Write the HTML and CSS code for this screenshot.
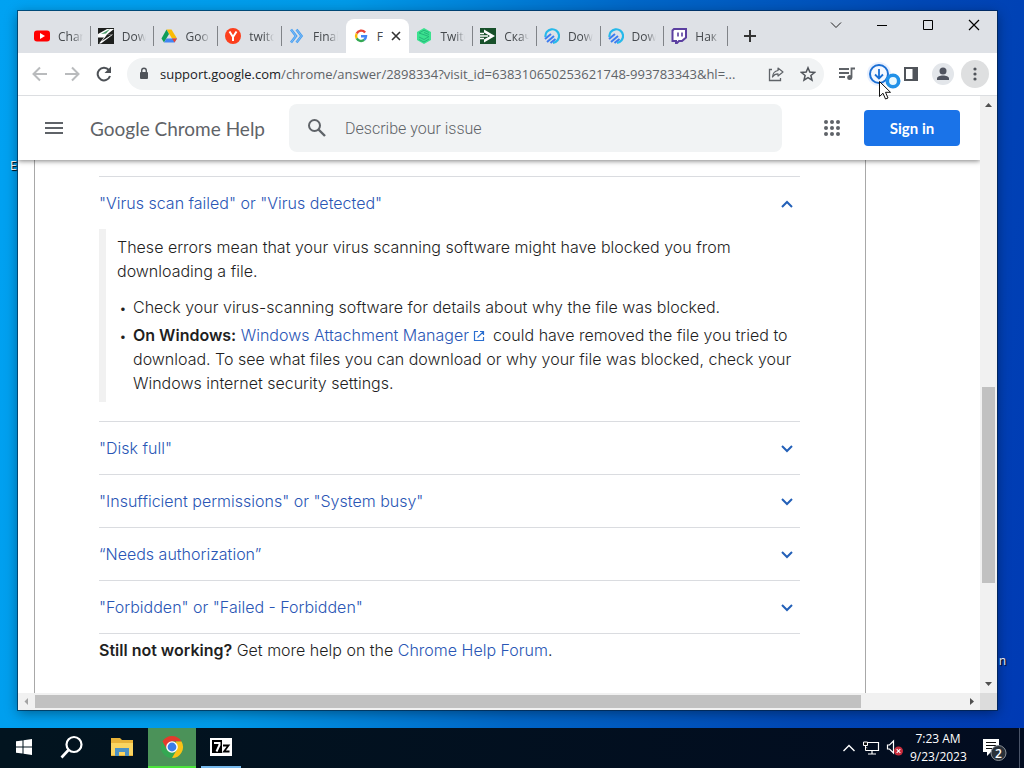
FILE: index.html
```html
<!DOCTYPE html>
<html lang="en">
<head>
    <meta charset="UTF-8">
    <meta name="viewport" content="width=device-width, initial-scale=1.0">
    <title>Fix file download errors - Google Chrome Help</title>
    <link rel="stylesheet" href="styles.css">
</head>
<body>

    <main class="desktop">
        <span class="desktop-label label-left">E</span>
        <span class="desktop-label label-right">n</span>

        <div class="window">

            <!-- Tab strip -->
            <div class="titlebar">
                <div class="tabs">
                    <button class="tab">
                        <svg class="favicon" viewBox="0 0 16 16"><rect x="0" y="2.500" width="16" height="11" rx="3" fill="#f00"/><path d="M6 5l5 3-5 3z" fill="#fff"/></svg>
                        <span class="tab-title">Chan</span>
                    </button>
                    <button class="tab">
                        <svg class="favicon" viewBox="0 0 16 16"><rect width="16" height="16" fill="#1d1f1d"/><path d="M0 6L9 1h7L9 6.500h6L3 15.500H1L6 9.500H0z" fill="#fff"/><path d="M3 6l9-5-4 4.500z" fill="#4c9a6a"/><path d="M9 6.500h5L4 13l4-5z" fill="#1d1f1d"/></svg>
                        <span class="tab-title">Dow</span>
                    </button>
                    <button class="tab">
                        <svg class="favicon" viewBox="0 0 16 16"><path d="M5.500 1.500h5L16 10.500h-5z" fill="#fbbc04"/><path d="M5.500 1.500L8 6 3 14.500.500 10.500z" fill="#0f9d58"/><path d="M5.500 10.500H16L13.500 14.500H3z" fill="#4285f4"/><path d="M11 10.500h5l-2.500 4z" fill="#ea4335"/></svg>
                        <span class="tab-title">Goo</span>
                    </button>
                    <button class="tab">
                        <svg class="favicon" viewBox="0 0 16 16"><circle cx="8" cy="8" r="8" fill="#fc3f1d"/><path d="M4.500 3.500L8 9v4M11.500 3.500L8 9" fill="none" stroke="#fff" stroke-width="2"/></svg>
                        <span class="tab-title">twitc</span>
                    </button>
                    <button class="tab">
                        <svg class="favicon" viewBox="0 0 16 16"><path d="M2 1.500l5 6.500-5 6.500M7.500 1.500l5 6.500-5 6.500" fill="none" stroke="#4a9ff0" stroke-width="2.600"/><path d="M2 1.500l5 6.500-5 6.500M7.500 1.500l5 6.500-5 6.500" fill="none" stroke="#9fd0fa" stroke-width=".6"/></svg>
                        <span class="tab-title">Final</span>
                    </button>
                    <button class="tab active">
                        <svg class="favicon" viewBox="0 0 16 16"><g fill="none" stroke-width="2.400"><path d="M12.100 4.400A5 5 0 0 0 3.700 5.600" stroke="#ea4335"/><path d="M3.700 5.600a5 5 0 0 0 0 4.800" stroke="#fbbc04"/><path d="M3.700 10.400a5 5 0 0 0 7.500 1.400" stroke="#34a853"/><path d="M11.200 11.800A5 5 0 0 0 13 8.200H8" stroke="#4285f4"/></g></svg>
                        <span class="tab-title">F</span>
                        <svg class="tab-close" viewBox="0 0 10 10"><path d="M1 1l8 8M9 1l-8 8" stroke="#333" stroke-width="1.600"/></svg>
                    </button>
                    <button class="tab">
                        <svg class="favicon" viewBox="0 0 16 16"><path d="M8 0l7 4v8l-7 4-7-4V4z" fill="#3be28f"/><path d="M13 4.500L8 2.200 3 5l10 3.500L8 11.500 3 9M3 11.500L8 14l5-3M13 6.500L8 4.500" fill="none" stroke="#22b077" stroke-width=".9"/></svg>
                        <span class="tab-title">Twitc</span>
                    </button>
                    <button class="tab">
                        <svg class="favicon" viewBox="0 0 16 16"><rect width="16" height="16" fill="#17502a"/><path d="M0 5.500h4M0 8h8M0 10.500h4" stroke="#fff" stroke-width="1.400"/><path d="M4 1.500L15 8 4 14.500v-3L10 8 4 4.500z" fill="#fff"/></svg>
                        <span class="tab-title">Скач</span>
                    </button>
                    <button class="tab">
                        <svg class="favicon" viewBox="0 0 16 16"><path d="M1.500 9A6.800 6.800 0 1 1 9 14.800" fill="none" stroke="#26b9ea" stroke-width="2.200"/><path d="M1 11l6-5M3 14l7-6M6.500 15l5-4" stroke="#3d7df0" stroke-width="2"/></svg>
                        <span class="tab-title">Dow</span>
                    </button>
                    <button class="tab">
                        <svg class="favicon" viewBox="0 0 16 16"><path d="M1.500 9A6.800 6.800 0 1 1 9 14.800" fill="none" stroke="#26b9ea" stroke-width="2.200"/><path d="M1 11l6-5M3 14l7-6M6.500 15l5-4" stroke="#3d7df0" stroke-width="2"/></svg>
                        <span class="tab-title">Dow</span>
                    </button>
                    <button class="tab">
                        <svg class="favicon" viewBox="0 0 16 16"><path d="M1.500 2.500L3 1h12v8.500L11 13H8l-2 2H5v-2H1.500z" fill="#fff" stroke="#5b3fa0" stroke-width="2"/><path d="M7 4.500v4M11 4.500v4" stroke="#5b3fa0" stroke-width="1.600"/></svg>
                        <span class="tab-title">Нак</span>
                    </button>
                </div>
                <button class="new-tab" aria-label="New tab">
                    <svg width="12" height="12" viewBox="0 0 12 12"><path d="M6 0v12M0 6h12" stroke="#333" stroke-width="2"/></svg>
                </button>
                <div class="window-controls">
                    <button aria-label="Search tabs"><svg width="12" height="12" viewBox="0 0 12 12"><path d="M1 3.500l5 5 5-5" fill="none" stroke="#222"/></svg></button>
                    <button aria-label="Minimize"><svg width="12" height="12" viewBox="0 0 12 12"><path d="M1 6.500h10" stroke="#000"/></svg></button>
                    <button aria-label="Maximize"><svg width="12" height="12" viewBox="0 0 12 12"><path d="M1.500 1.500h9v9h-9z" fill="none" stroke="#000"/></svg></button>
                    <button aria-label="Close"><svg width="12" height="12" viewBox="0 0 12 12"><path d="M1 1l10 10M11 1L1 11" stroke="#000" stroke-width="1.200"/></svg></button>
                </div>
            </div>

            <!-- Address bar -->
            <div class="toolbar">
                <button class="tool" aria-label="Back"><svg width="16" height="16" viewBox="0 0 16 16"><path d="M15 8H2M8 1.500L1.500 8 8 14.500" fill="none" stroke="#b9bbbd" stroke-width="2"/></svg></button>
                <button class="tool" aria-label="Forward"><svg width="16" height="16" viewBox="0 0 16 16"><path d="M1 8h13M8 1.500L14.500 8 8 14.500" fill="none" stroke="#b9bbbd" stroke-width="2"/></svg></button>
                <button class="tool" aria-label="Reload"><svg width="16" height="16" viewBox="0 0 16 16"><path d="M14 10A6.300 6.300 0 1 1 12.800 4" fill="none" stroke="#4d5156" stroke-width="2"/><path d="M15 .5V7H8.500z" fill="#4d5156"/></svg></button>
                <div class="omnibox">
                    <svg width="10" height="14" viewBox="0 0 10 14"><rect x="1" y="5" width="8" height="7" rx="1" fill="#50545a"/><path d="M2.700 6V3.500a2.300 2.300 0 0 1 4.600 0V6" fill="none" stroke="#50545a" stroke-width="1.400"/></svg>
                    <span class="url"><b>support.google.com</b>/chrome/answer/2898334?visit_id=638310650253621748-993783343&amp;hl=...</span>
                    <button class="tool" aria-label="Share"><svg width="16" height="16" viewBox="0 0 16 16"><path d="M4 3.500H1.500v11h11V12" fill="none" stroke="#5f6368" stroke-width="1.300"/><path d="M10 2l5 4-5 4V7.800C7.500 7.800 5.800 8.800 4.500 11c.3-3.500 2.200-6 5.500-6.500z" fill="none" stroke="#5f6368" stroke-width="1.200" stroke-linejoin="round"/></svg></button>
                    <button class="tool" aria-label="Bookmark"><svg width="16" height="16" viewBox="0 0 16 16"><path d="M8 1.800l1.800 4.300 4.700.4-3.600 3 1.100 4.600L8 11.700l-4 2.400 1.100-4.600-3.600-3 4.700-.4z" fill="none" stroke="#50545a" stroke-width="1.500"/></svg></button>
                </div>
                <button class="tool" aria-label="Media"><svg width="18" height="16" viewBox="0 0 18 16"><path d="M1 3h10M1 7h10M1 11h6" stroke="#5f6368" stroke-width="1.800"/><path d="M13.500 11.500V2.500H17" fill="none" stroke="#5f6368" stroke-width="1.800"/><circle cx="11.700" cy="11.500" r="2.500" fill="#5f6368"/></svg></button>
                <button class="tool" aria-label="Downloads">
                    <svg width="24" height="24" viewBox="0 0 24 24"><circle cx="12" cy="12" r="12" fill="#e8f0fe"/><circle cx="12" cy="12" r="9" fill="#f4f8ff" stroke="#1b6fd4" stroke-width="2"/><path d="M12 7v9M8 12.500l4 4 4-4" fill="none" stroke="#1b6fd4" stroke-width="1.800"/></svg>
                    <svg class="cursor" width="28" height="30" viewBox="0 0 28 30"><circle cx="15" cy="9" r="5.700" fill="#e8f8ff" stroke="#2191e8" stroke-width="3.600"/><path d="M1.500 9.500v15l3.500-3.300 2.500 5.800 2.500-1-2.500-5.700h5z" fill="#fff" stroke="#111"/></svg>
                </button>
                <button class="tool" aria-label="Side panel"><svg width="14" height="14" viewBox="0 0 14 14"><path d="M1 1h12v12H1z" fill="#fff" stroke="#50545a" stroke-width="2"/><path d="M8.500 1H13v12H8.500z" fill="#50545a"/></svg></button>
                <button class="tool" aria-label="Profile"><svg width="22" height="22" viewBox="0 0 22 22"><circle cx="11" cy="11" r="11" fill="#e3e6ea"/><circle cx="11" cy="8" r="3.500" fill="#50545f"/><path d="M5 17v-1.500c0-4 12-4 12 0V17z" fill="#50545f"/></svg></button>
                <button class="tool" aria-label="Menu"><svg width="28" height="28" viewBox="0 0 28 28"><circle cx="14" cy="14" r="14" fill="#dedfe0"/><g fill="#50545a"><circle cx="14" cy="9" r="1.600"/><circle cx="14" cy="14" r="1.600"/><circle cx="14" cy="19" r="1.600"/></g></svg></button>
            </div>

            <!-- Page -->
            <div class="viewport">
                <div class="page">
                    <header class="help-header">
                        <button class="menu-button" aria-label="Main menu"><svg width="18" height="12" viewBox="0 0 18 12"><path d="M0 1h18M0 6h18M0 11h18" stroke="#5f6368" stroke-width="2"/></svg></button>
                        <a class="help-title" href="#">Google Chrome Help</a>
                        <label class="search">
                            <svg width="20" height="20" viewBox="0 0 20 20"><circle cx="7.500" cy="7.500" r="5.500" fill="none" stroke="#5f6368" stroke-width="2"/><path d="M11.500 11.500l6.500 6.500" stroke="#5f6368" stroke-width="2.400"/></svg>
                            <input type="text" placeholder="Describe your issue" aria-label="Describe your issue">
                        </label>
                        <button class="apps" aria-label="Google apps"><svg width="16" height="16" viewBox="0 0 16 16" fill="#5f6368"><circle cx="2" cy="2" r="2"/><circle cx="8" cy="2" r="2"/><circle cx="14" cy="2" r="2"/><circle cx="2" cy="8" r="2"/><circle cx="8" cy="8" r="2"/><circle cx="14" cy="8" r="2"/><circle cx="2" cy="14" r="2"/><circle cx="8" cy="14" r="2"/><circle cx="14" cy="14" r="2"/></svg></button>
                        <button class="sign-in">Sign in</button>
                    </header>

                    <article class="sheet">
                        <section class="entry open">
                            <button class="entry-title">"Virus scan failed" or "Virus detected"
                                <svg class="chevron" viewBox="0 0 12 8"><path d="M1 7l5-5 5 5"/></svg>
                            </button>
                            <div class="entry-body">
                                <p>These errors mean that your virus scanning software might have blocked you from downloading a file.</p>
                                <ul>
                                    <li>Check your virus-scanning software for details about why the file was blocked.</li>
                                    <li><strong>On Windows:</strong> <a href="#">Windows Attachment Manager <svg class="external" viewBox="0 0 12 12"><path d="M5 1.500H1.500v9h9V7M7 1.500h3.500V5M10.500 1.500L4.500 7.500" fill="none" stroke="#2b6fd0" stroke-width="1.200"/></svg></a> could have removed the file you tried to download. To see what files you can download or why your file was blocked, check your Windows internet security settings.</li>
                                </ul>
                            </div>
                        </section>
                        <section class="entry">
                            <button class="entry-title">"Disk full"
                                <svg class="chevron" viewBox="0 0 12 8"><path d="M1 1l5 5 5-5"/></svg>
                            </button>
                        </section>
                        <section class="entry">
                            <button class="entry-title">"Insufficient permissions" or "System busy"
                                <svg class="chevron" viewBox="0 0 12 8"><path d="M1 1l5 5 5-5"/></svg>
                            </button>
                        </section>
                        <section class="entry">
                            <button class="entry-title">“Needs authorization”
                                <svg class="chevron" viewBox="0 0 12 8"><path d="M1 1l5 5 5-5"/></svg>
                            </button>
                        </section>
                        <section class="entry">
                            <button class="entry-title">"Forbidden" or "Failed - Forbidden"
                                <svg class="chevron" viewBox="0 0 12 8"><path d="M1 1l5 5 5-5"/></svg>
                            </button>
                        </section>
                        <p class="more-help"><strong>Still not working?</strong> Get more help on the <a href="#">Chrome Help Forum</a>.</p>
                    </article>
                </div>
                <div class="scroll-y">
                    <svg class="arrow" viewBox="0 0 17 17"><path d="M5 11l3.500-4 3.500 4z" fill="#505050"/></svg>
                    <div class="track"><div class="thumb"></div></div>
                    <svg class="arrow" viewBox="0 0 17 17"><path d="M5 6l3.500 4L12 6z" fill="#505050"/></svg>
                </div>
            </div>
            <div class="scroll-x">
                <svg class="arrow" viewBox="0 0 17 17"><path d="M10 5L6.500 8.500 10 12z" fill="#a3a3a3"/></svg>
                <div class="track"><div class="thumb"></div></div>
                <svg class="arrow" viewBox="0 0 17 17"><path d="M7 5l4 3.500L7 12z" fill="#505050"/></svg>
                <div class="corner"></div>
            </div>
        </div>
    </main>

    <!-- Taskbar -->
    <footer class="taskbar">
        <button class="task" aria-label="Start"><svg width="16" height="16" viewBox="0 0 16 16" fill="#fff"><path d="M0 2.300l6.500-.9v6.100H0zM7.500 1.200L16 0v7.500H7.500zM0 8.500h6.500v6.100L0 13.700zM7.500 8.500H16V16l-8.500-1.200z"/></svg></button>
        <button class="task" aria-label="Search"><svg width="24" height="24" viewBox="0 0 24 24"><circle cx="14" cy="9.500" r="7.500" fill="none" stroke="#fff" stroke-width="2.200"/><path d="M8.500 15L1.500 22.500" stroke="#fff" stroke-width="2.600"/></svg></button>
        <button class="task" aria-label="File Explorer"><svg width="22" height="20" viewBox="0 0 22 20"><path d="M0 1h9l2 2h11v16H0z" fill="#e9b338"/><path d="M0 6h22v12H0z" fill="#fbd560"/><path d="M4 11h14v8h-4v-4H8v4H4z" fill="#4d92c4"/></svg></button>
        <button class="task current" aria-label="Google Chrome"><svg width="24" height="24" viewBox="0 0 24 24"><circle cx="12" cy="12" r="11" fill="#34a853"/><path d="M2.470 6.500A11 11 0 0 1 21.530 6.500H12L7.200 14.700z" fill="#e33b2e"/><path d="M21.530 6.500A11 11 0 0 1 12 23l4.800-8.300L16 6.500z" fill="#fbc116"/><circle cx="12" cy="12" r="5.800" fill="#fff"/><circle cx="12" cy="12" r="4.400" fill="#3b7de8"/></svg></button>
        <button class="task running" aria-label="7-Zip"><svg width="22" height="18" viewBox="0 0 22 18"><rect width="22" height="18" fill="#fff"/><rect x="2" y="2" width="10" height="13" fill="#000"/><path d="M4 5h5.500v2L6.500 13.500" fill="none" stroke="#fff" stroke-width="2"/><path d="M13 7.500h5.500l-4.500 6h5.500" fill="none" stroke="#000" stroke-width="1.800"/></svg></button>

        <div class="tray">
            <svg width="14" height="16" viewBox="0 0 14 16"><path d="M1.500 11L7 5.500l5.500 5.500" fill="none" stroke="#fff" stroke-width="1.400"/></svg>
            <svg width="18" height="16" viewBox="0 0 18 16"><path d="M5.500 2.500h11v8h-12V7M10 10.500V14M6 14h8" fill="none" stroke="#fff" stroke-width="1.200"/><path d="M1.500 2h4v3.500h-4zM3.500 5.500v5H6" fill="#111" stroke="#fff"/></svg>
            <svg width="18" height="18" viewBox="0 0 18 18"><path d="M1.500 6h2l4-4v12l-4-4h-2z" fill="none" stroke="#fff" stroke-width="1.200"/><circle cx="12.500" cy="12" r="4.500" fill="#c92c3c"/><path d="M10.700 10.200l3.600 3.600M14.300 10.200l-3.600 3.600" stroke="#fff" stroke-width="1.100"/></svg>
            <time class="clock">7:23 AM<br>9/23/2023</time>
            <svg width="26" height="26" viewBox="0 0 26 26"><path d="M1 4h16v13H9l-4 4v-4H1z" fill="#fff"/><path d="M4 7.500h10M4 10.500h10M4 13.500h6" stroke="#111" stroke-width="1.200"/><circle cx="16.500" cy="18" r="7.500" fill="#2a3139" stroke="#8b9198"/><text x="16.500" y="22.500" text-anchor="middle" class="badge-text">2</text></svg>
        </div>
    </footer>

</body>
</html>
```
FILE: styles.css
```css
/* General */
* {
    box-sizing: border-box;
}

body {
    display: flex;
    flex-direction: column;
    height: 100vh;
    margin: 0;
    overflow: hidden;
    font-family: "Open Sans", sans-serif;
    font-size: 12px;
}

button {
    display: flex;
    align-items: center;
    justify-content: center;
    padding: 0;
    border: none;
    background: none;
    font: inherit;
    color: inherit;
}

svg {
    flex: none;
}

a {
    color: #2a56b5;
    text-decoration: none;
}

.desktop {
    position: relative;
    display: flex;
    flex: 1;
    min-height: 0;
    padding: 11px 27px 18px 18px;
    background: linear-gradient(100deg, #00a2f2 0%, #009ae8 30%, #0067c8 55%, #0048b6 80%, #003ab4 100%);
}

.desktop-label {
    position: absolute;
    color: #fff;
    text-shadow: 1px 1px 1px #000;
}

.label-left {
    top: 157px;
    left: 10px;
}

.label-right {
    top: 652px;
    right: 18px;
}

.window {
    position: relative;
    display: flex;
    flex: 1;
    flex-direction: column;
    min-width: 0;
    background: #fff;
    box-shadow: 0 0 0 1px rgba(0, 30, 60, 0.6), 0 3px 12px rgba(0, 0, 0, 0.4);
}

/* Tab strip */
.titlebar {
    display: flex;
    height: 42px;
    padding-left: 9px;
    background: #dee1e6;
}

.tabs {
    display: flex;
    flex: 0 1 701px;
    min-width: 0;
    padding-top: 8px;
}

.tab {
    position: relative;
    flex: 1 1 0;
    gap: 8px;
    min-width: 0;
    padding: 0 8px 0 7px;
    color: #45494d;
}

.tab::after {
    content: "";
    position: absolute;
    right: 0;
    top: 7px;
    width: 1px;
    height: 20px;
    background: #808388;
}

.tab.active::after,
.tab:has(+ .active)::after {
    display: none;
}

.tab.active {
    border-radius: 8px 8px 0 0;
    background: #fff;
}

.favicon {
    width: 16px;
    height: 16px;
}

.tab-title {
    flex: 1;
    min-width: 0;
    overflow: hidden;
    text-align: left;
    white-space: nowrap;
    -webkit-mask-image: linear-gradient(to right, #000 60%, transparent);
    mask-image: linear-gradient(to right, #000 60%, transparent);
}

.tab-close {
    width: 10px;
    height: 10px;
}

.active .tab-title {
    -webkit-mask-image: none;
    mask-image: none;
}

.new-tab {
    width: 44px;
    padding-top: 8px;
}

.window-controls {
    display: flex;
    height: 28px;
    margin-left: auto;
}

.window-controls button {
    width: 46px;
}

/* Address bar */
.toolbar {
    display: flex;
    align-items: center;
    height: 43px;
    padding: 0 6px;
    border-bottom: 1px solid #dcdee1;
}

.tool {
    position: relative;
    flex: none;
    width: 32px;
    height: 32px;
}

.omnibox {
    display: flex;
    flex: 1;
    align-items: center;
    min-width: 0;
    height: 32px;
    margin: 0 7px;
    padding-left: 12px;
    border-radius: 16px;
    background: #f1f3f4;
}

.url {
    flex: 1;
    overflow: hidden;
    margin-left: 11px;
    color: #5f6368;
    font-size: 13px;
    white-space: nowrap;
}

.url b {
    color: #202124;
    font-weight: 400;
}

.cursor {
    position: absolute;
    left: 15px;
    top: 14px;
    z-index: 2;
}

/* Help page */
.viewport {
    display: flex;
    flex: 1;
    min-height: 0;
}

.page {
    flex: 1;
    min-width: 0;
    overflow: hidden;
    background: #fff;
}

.help-header {
    position: relative;
    display: flex;
    align-items: center;
    height: 64px;
    padding: 0 20px 0 27px;
    background: #fff;
    box-shadow: 0 1px 5px rgba(0, 0, 0, 0.5);
}

.help-title {
    margin-left: 27px;
    color: #5f6368;
    font-family: Lato, sans-serif;
    font-size: 19px;
}

.search {
    display: flex;
    flex: 1;
    align-items: center;
    height: 48px;
    margin: 0 42px 0 24px;
    padding-left: 18px;
    border-radius: 8px;
    background: #f1f3f4;
}

.search input {
    flex: 1;
    min-width: 0;
    margin-left: 18px;
    padding: 0;
    border: none;
    outline: none;
    background: none;
    font-family: Roboto, sans-serif;
    font-size: 16px;
    font-weight: 300;
}

.search input::placeholder {
    color: #5f6368;
}

.sign-in {
    width: 96px;
    height: 36px;
    margin-left: 24px;
    border-radius: 4px;
    background: #1a73e8;
    color: #fff;
    font-family: Lato, sans-serif;
    font-size: 15px;
    font-weight: 700;
}

.sheet {
    margin: 0 114px 0 16px;
    padding: 16px 65px 43px 64px;
    border: 1px solid #a8a8a8;
    border-width: 0 1px;
    color: #1f1f1f;
    font-family: Inter, sans-serif;
    font-size: 16px;
    font-weight: 300;
    line-height: 24px;
}

.sheet p,
.sheet ul {
    margin: 0;
}

.sheet strong {
    font-weight: 600;
}

.entry {
    border-top: 1px solid #dadce0;
}

.entry-title {
    justify-content: space-between;
    width: 100%;
    height: 52px;
    padding-right: 7px;
    color: #2a56b5;
    text-align: left;
}

.chevron {
    width: 12px;
    height: 8px;
    margin-top: 2px;
    fill: none;
    stroke: #2360b8;
    stroke-width: 2;
}

.entry-body {
    margin-bottom: 19px;
    padding: 6px 0 7px 11px;
    border-left: 7px solid #f1f1f1;
}

.entry-body ul {
    margin-top: 12px;
    padding-left: 16px;
    list-style-type: "•\2002";
}

.entry-body li::marker {
    font-size: 13px;
}

.entry-body li + li {
    margin-top: 4px;
}

.external {
    width: 12px;
    height: 12px;
    margin-right: 3px;
    vertical-align: -1px;
}

.more-help {
    padding-top: 4px;
    border-top: 1px solid #dadce0;
}

/* Scrollbars */
.scroll-y,
.scroll-x {
    display: flex;
    background: #f1f1f1;
}

.scroll-y {
    flex-direction: column;
    width: 17px;
}

.scroll-x {
    height: 17px;
}

.arrow {
    width: 17px;
    height: 17px;
}

.track {
    flex: 1;
}

.thumb {
    background: #c1c1c1;
}

.scroll-y .track {
    display: grid;
    grid-template-rows: 274fr 196fr 93fr;
    padding: 0 2px;
}

.scroll-y .thumb {
    grid-row: 2;
}

.scroll-x .track {
    padding: 2px 0;
}

.scroll-x .thumb {
    width: 89%;
    height: 100%;
}

.corner {
    width: 17px;
    background: #dcdcdc;
}

/* Taskbar */
.taskbar {
    display: flex;
    height: 40px;
    background: linear-gradient(to right, #02141f, #020c20);
    color: #fff;
}

.task {
    width: 48px;
    border-bottom: 2px solid transparent;
}

.task:nth-child(3) {
    width: 52px;
}

.task.current {
    border-bottom-color: #4be33c;
    background: #4b9259;
}

.task.running {
    width: 40px;
    margin-left: 5px;
    border-bottom-color: #76b9ed;
}

.tray {
    display: flex;
    align-items: center;
    gap: 6px;
    margin-left: auto;
    margin-right: 4px;
    padding-right: 11px;
    border-right: 1px solid #4a5468;
}

.clock {
    width: 56px;
    margin-right: 10px;
    line-height: 18px;
    text-align: center;
}

.badge-text {
    fill: #fff;
    font-size: 12px;
    font-weight: 600;
}
```
